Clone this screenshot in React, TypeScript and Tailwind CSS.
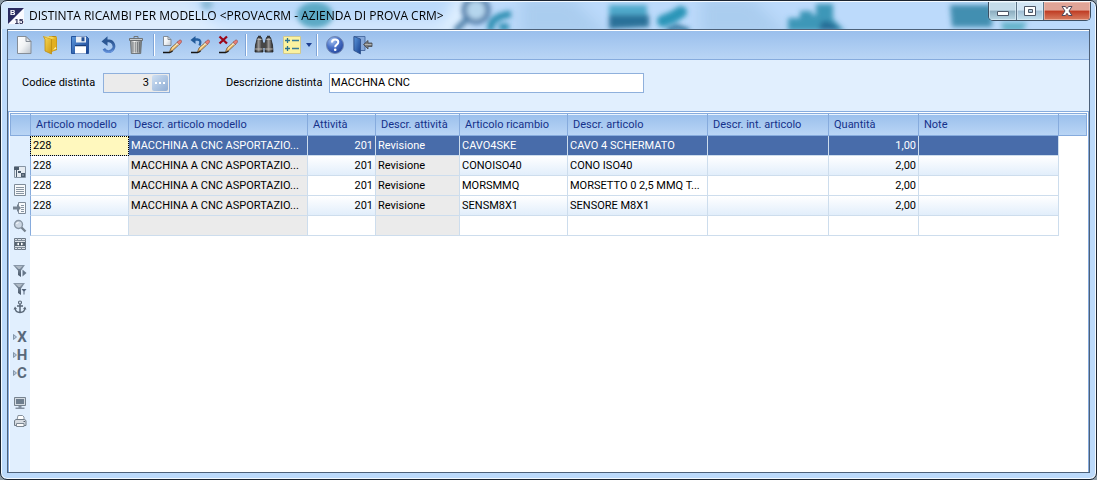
import React from "react";

type IconProps = { children: React.ReactNode; size?: number };

function Icon({ children, size = 20 }: IconProps) {
  return (
    <svg viewBox={`0 0 ${size} ${size}`} width={size} height={size} aria-hidden="true" className="block shrink-0">
      {children}
    </svg>
  );
}

function Gradients() {
  return (
    <svg width="0" height="0" className="absolute" aria-hidden="true">
      <defs>
        <linearGradient id="paper" x1="0" y1="0" x2="1" y2="1">
          <stop offset="0" stopColor="#ffffff" />
          <stop offset="0.5" stopColor="#f1f3f5" />
          <stop offset="1" stopColor="#bcc3cb" />
        </linearGradient>
        <linearGradient id="gold" x1="0" y1="0" x2="1" y2="1">
          <stop offset="0" stopColor="#f9dc5c" />
          <stop offset="1" stopColor="#cf9a10" />
        </linearGradient>
        <linearGradient id="blue" x1="0" y1="0" x2="1" y2="1">
          <stop offset="0" stopColor="#5b97dc" />
          <stop offset="1" stopColor="#163f8d" />
        </linearGradient>
        <linearGradient id="arrow" x1="0" y1="0" x2="0" y2="1">
          <stop offset="0" stopColor="#2b5590" />
          <stop offset="1" stopColor="#5382cc" />
        </linearGradient>
        <linearGradient id="metal" x1="0" y1="0" x2="1" y2="0">
          <stop offset="0" stopColor="#85898c" />
          <stop offset="0.35" stopColor="#f4f4f2" />
          <stop offset="1" stopColor="#6d7275" />
        </linearGradient>
        <linearGradient id="dark" x1="0" y1="0" x2="1" y2="0">
          <stop offset="0" stopColor="#222" />
          <stop offset="0.45" stopColor="#9a9896" />
          <stop offset="1" stopColor="#1d1d1f" />
        </linearGradient>
        <radialGradient id="globe" cx="0.35" cy="0.25" r="0.8">
          <stop offset="0" stopColor="#a7c5f2" />
          <stop offset="0.5" stopColor="#4a72c8" />
          <stop offset="1" stopColor="#24459c" />
        </radialGradient>
        <linearGradient id="slate" x1="0" y1="0" x2="0" y2="1">
          <stop offset="0" stopColor="#8b9aab" />
          <stop offset="1" stopColor="#465567" />
        </linearGradient>
      </defs>
    </svg>
  );
}

function Pencil() {
  return (
    <>
      <path d="M1 17.5h6.5l3-1.5" fill="none" stroke="#151515" strokeWidth="1.6" />
      <path d="M7.5 16.8 9 13l7-6.2 2 2-7 6.5z" fill="#efbf72" stroke="#6c4b24" strokeWidth="0.7" />
      <path d="m10 13.5 6.3-5.6" stroke="#fff0bd" strokeWidth="1" />
      <path d="m15 7.5 2.2-2.2q1-.8 2 .1t.1 2.1L17.200 9.500z" fill="#e77f78" stroke="#8e4343" strokeWidth="0.6" />
      <path d="m14.500 8 2.300 2.300" stroke="#d9e1ea" strokeWidth="1" />
    </>
  );
}

const icons = {
  newDoc: (
    <Icon>
      <path d="M3.500 1.500h8.500l5 5v12h-13.500z" fill="url(#paper)" stroke="#858d97" />
      <path d="M12 1.500v5h5z" fill="#dde1e6" stroke="#858d97" strokeLinejoin="round" />
    </Icon>
  ),
  open: (
    <Icon>
      <path d="M7 1h7l1 2v12l-6 2z" fill="#b88a16" />
      <path d="M9 3.500 14.500 1.500v13L9 17z" fill="#e2b023" />
      <path d="M1.500 1.500 9.500 4v15l-6.500-3V4.500z" fill="url(#gold)" stroke="#bd8e14" strokeWidth="0.8" />
      <path d="M1.500 1.500h8l4 1.500-4 1z" fill="#f6d75a" />
      <path d="m11 15 2.500-3 1 1.500z" fill="#fff4b5" />
    </Icon>
  ),
  save: (
    <Icon>
      <path d="M1.500 1.500h15l2 2v15h-17z" fill="url(#blue)" stroke="#24539c" />
      <path d="M6 1.500h10v6H6z" fill="#e8eef5" />
      <path d="M11.500 2.300h3v4h-3z" fill="#244f93" />
      <path d="M5 11h11v7.500H5z" fill="#fff" />
      <path d="M5 10h11v1.200H5z" fill="#173c79" />
    </Icon>
  ),
  undo: (
    <Icon>
      <path d="M8 5.800h3a5.400 5.400 0 1 1-5.200 8" fill="none" stroke="url(#arrow)" strokeWidth="2.800" />
      <path d="m3.500 6.500 6-5.200v9.700z" fill="#2c5894" />
      <path d="M5 15.300q5 4.200 10 .2" fill="none" stroke="#6d99df" strokeWidth="1" />
    </Icon>
  ),
  trash: (
    <Icon>
      <path d="M4.500 5.500h11l-.8 13h-9.400z" fill="url(#metal)" stroke="#696e71" strokeWidth="0.900" />
      <path d="M7 7v10.500M9.200 7v10.500M11.400 7v10.500M13.500 7v10.500" stroke="#6c7174" strokeWidth="0.900" />
      <path d="M3.500 3.500h13v2h-13z" fill="#c8cbcb" stroke="#65696c" strokeWidth="0.900" />
      <path d="M8 3.300V1.500h4v1.800" fill="none" stroke="#707476" />
    </Icon>
  ),
  editDoc: (
    <Icon>
      <path d="M1.500 1.500h4.500l3 3v6H1.500z" fill="url(#paper)" stroke="#79828c" strokeWidth="0.900" />
      <path d="M6 1.500v3h3" fill="none" stroke="#79828c" strokeWidth="0.900" />
      <Pencil />
    </Icon>
  ),
  editUndo: (
    <Icon>
      <path d="M4 4.500h3.500q4.500.5 2 6" fill="none" stroke="#2762a3" strokeWidth="2.300" />
      <path d="M.5 5 5.500 1v8z" fill="#235b99" />
      <Pencil />
    </Icon>
  ),
  editDelete: (
    <Icon>
      <path d="m1.500 1.500 7.500 7M9 1.500l-7.500 7" stroke="#9c0718" strokeWidth="2.300" />
      <Pencil />
    </Icon>
  ),
  find: (
    <Icon>
      <path d="M3.500 2.500h4l1 4 .5 10.500H1l.5-7z" fill="url(#dark)" stroke="#242424" strokeWidth="0.800" />
      <path d="M12.500 2.500h4l2 7.500.5 7H11l.5-10.500z" fill="url(#dark)" stroke="#242424" strokeWidth="0.800" />
      <path d="M8 7.500h4V13H8z" fill="#464646" />
      <path d="M1.200 14h7.500M11.200 14h7.500M3.500 4.500h4M12.500 4.500h4" stroke="#bcb7b0" strokeWidth="1" />
      <path d="M4 1.500h3M13 1.500h3" stroke="#353535" strokeWidth="1.500" />
    </Icon>
  ),
  options: (
    <Icon>
      <path d="M1.500 1.500h17v17h-17z" fill="#fbf2a0" stroke="#d0c990" />
      <path d="M3 5.500h5M5.500 3v5M3 13.500h5M5.500 11v5" stroke="#2c718f" strokeWidth="1.300" />
      <path d="M10 5.500h7M10 13.500h7" stroke="#397c99" strokeWidth="1.600" />
    </Icon>
  ),
  help: (
    <Icon>
      <circle cx="10" cy="10" r="8.500" fill="url(#globe)" stroke="#7086b2" />
      <path d="M7 7.500q0-3 3.100-3 3.200 0 3.200 2.600 0 1.500-1.800 2.700-1.300.8-1.300 2.400" fill="none" stroke="#fff" strokeWidth="2" />
      <circle cx="10.200" cy="14.800" r="1.300" fill="#fff" />
    </Icon>
  ),
  exit: (
    <Icon>
      <path d="M1 1.500h11v14H1z" fill="#87a9da" stroke="#46699f" strokeWidth="0.900" />
      <path d="M1 1.500 7.500 4v15L1 15.500z" fill="url(#blue)" stroke="#2d4f88" strokeWidth="0.800" />
      <path d="M10.500 9.500 15 5.500v2.500h4v3.500h-4V14z" fill="#777a7d" stroke="#45484c" strokeWidth="0.800" />
      <path d="M12 9.500h6.500" stroke="#b5b5b1" />
    </Icon>
  ),
};

const railGroups = [
  [
    {
      label: "Struttura",
      icon: (
        <Icon size={14}>
          <path d="M1.500 1.500h11v11h-11z" fill="#e5ebf1" stroke="#8795a4" />
          <path d="M1 2h5v3H1zM3 5h1v7H3zM5 6h3v2H5zM8 8h4v4H8z" fill="#4b5b6c" />
          <path d="M9.500 9.500h1v1h-1z" fill="#fff" />
        </Icon>
      ),
    },
    {
      label: "Elenco",
      icon: (
        <Icon size={14}>
          <path d="M1.500 1.500h11v11h-11z" fill="#f7f9fb" stroke="#7e8b99" />
          <path d="M3 4.500h8M3 6.500h8M3 8.500h8M3 10.500h8" stroke="#8794a2" />
        </Icon>
      ),
    },
    {
      label: "Inserisci",
      icon: (
        <Icon size={14}>
          <path d="M5.500 1.500h7v11h-7z" fill="#f7f9fb" stroke="#7e8b99" />
          <path d="M8 4.500h3M8 6.500h3M8 8.500h3M8 10.500h3" stroke="#8794a2" />
          <path d="M0 5.500h4V3l4 4-4 4V8.500H0z" fill="#768392" />
        </Icon>
      ),
    },
    {
      label: "Zoom",
      icon: (
        <Icon size={14}>
          <circle cx="5.500" cy="5.500" r="4" fill="#ccd7e3" stroke="#8a97a5" strokeWidth="1.400" />
          <path d="m8.500 8.500 4 4" stroke="#76818d" strokeWidth="2.300" />
          <path d="M3.500 5q.5-1.500 2-1.500" fill="none" stroke="#fff" />
        </Icon>
      ),
    },
    {
      label: "Adatta colonne",
      icon: (
        <Icon size={14}>
          <path d="M1.500 1.500h11v11h-11z" fill="#dce2e8" stroke="#6a7785" />
          <path d="M1 3.500h12M1 10.500h12M4.500 1v3M8.500 1v3M4.500 10v3M8.500 10v3" stroke="#7d8996" />
          <path d="M2 5h10v4H2z" fill="#56636f" />
          <path d="M6 5.500v3L3.500 7zM8 5.500v3L10.500 7z" fill="#fff" />
        </Icon>
      ),
    },
  ],
  [
    {
      label: "Applica filtro",
      icon: (
        <Icon size={14}>
          <path d="M0 1h12L8 6.500V13l-3-2V6.500z" fill="url(#slate)" />
          <path d="M2.500 2h7L7 5h-1.500z" fill="#aeb9c5" />
          <path d="M9.500 5.500v7l4-3.500z" fill="#66778a" />
        </Icon>
      ),
    },
    {
      label: "Filtro",
      icon: (
        <Icon size={14}>
          <path d="M0 1h12L8 6.500V13l-3-2V6.500z" fill="url(#slate)" />
          <path d="M2.500 2h7L7 5h-1.500z" fill="#aeb9c5" />
          <path d="M8.500 7h5l-2 2.500v3h-1v-3z" fill="#52637a" />
        </Icon>
      ),
    },
    {
      label: "Ancora",
      icon: (
        <Icon size={14}>
          <circle cx="7" cy="2.500" r="1.500" fill="none" stroke="#5a6878" strokeWidth="1.200" />
          <path d="M7 4v8.500M4 6h6M2 8q.5 4.500 5 4.500T12 8" fill="none" stroke="#5a6878" strokeWidth="1.500" />
          <path d="m.5 9.500 1.500-3 2 2.500zM13.500 9.500 12 6.500 10 9z" fill="#5a6878" />
        </Icon>
      ),
    },
  ],
];

const letterTools = ["X", "H", "C"];

const outputTools = [
  {
    label: "Anteprima a video",
    icon: (
      <Icon size={14}>
        <path d="M1.500 1.500h11v8h-11z" fill="#d4dbe2" stroke="#76838f" />
        <path d="M3 3h8v5H3z" fill="#6e7e8e" />
        <path d="M5.500 10h3v1.500h3V13h-9v-1.500h3z" fill="#8390a0" />
      </Icon>
    ),
  },
  {
    label: "Stampa",
    icon: (
      <Icon size={14}>
        <path d="M4 6 5 1.500h4.500L11 3v3" fill="#fff" stroke="#87929e" />
        <path d="M1.500 6.500 3 5.500h8.500l1.500 1v5H1.500z" fill="#d6dbe1" stroke="#707c88" />
        <path d="M3.500 9.500h7.500v3h-7.500z" fill="#fafafa" stroke="#7c8792" />
        <path d="M10.500 7.500h1.500" stroke="#59636e" />
      </Icon>
    ),
  },
];

const columns = [
  { title: "Articolo modello", width: "w-[99px]", key: "model" },
  { title: "Descr. articolo modello", width: "w-[179px]", key: "modelDesc" },
  { title: "Attività", width: "w-[68px]", key: "activity" },
  { title: "Descr. attività", width: "w-[84px]", key: "activityDesc" },
  { title: "Articolo ricambio", width: "w-[108px]", key: "part" },
  { title: "Descr. articolo", width: "w-[140px]", key: "partDesc" },
  { title: "Descr. int. articolo", width: "w-[121px]", key: "intDesc" },
  { title: "Quantità", width: "w-[90px]", key: "qty" },
  { title: "Note", width: "w-[140px]", key: "note" },
];

const rows: Record<string, string>[] = [
  { part: "CAVO4SKE", partDesc: "CAVO 4 SCHERMATO", qty: "1,00" },
  { part: "CONOISO40", partDesc: "CONO ISO40", qty: "2,00" },
  { part: "MORSMMQ", partDesc: "MORSETTO 0 2,5 MMQ T...", qty: "2,00" },
  { part: "SENSM8X1", partDesc: "SENSORE M8X1", qty: "2,00" },
].map((r) => ({
  model: "228",
  modelDesc: "MACCHINA A CNC ASPORTAZIO...",
  activity: "201",
  activityDesc: "Revisione",
  ...r,
}));
rows.push({});

function ToolButton({ label, children }: { label: string; children: React.ReactNode }) {
  return (
    <button type="button" aria-label={label} className="flex h-7 w-7 items-center justify-center">
      {children}
    </button>
  );
}

function Separator() {
  return (
    <div className="flex w-2 justify-center">
      <div className="h-[22px] w-[2px] border-l border-[#7fa5d8] bg-white" />
    </div>
  );
}

function TitleBackdrop() {
  return (
    <svg className="absolute inset-0 h-full w-full" aria-hidden="true">
      <defs>
        <filter id="soft" x="-20%" y="-20%" width="140%" height="140%">
          <feGaussianBlur stdDeviation="2.500" />
        </filter>
        <filter id="softer" x="-20%" y="-50%" width="140%" height="200%">
          <feGaussianBlur stdDeviation="7" />
        </filter>
      </defs>
      <g filter="url(#softer)">
        <path d="M-10-5h200l35 40H-10z" fill="#d5e8fc" />
        <path d="M520-5h50l40 40h-90zM700-5h50l40 40h-90z" fill="#9fc4e7" opacity="0.600" />
        <path d="M20 20h420v12H20z" fill="#e9f4ff" opacity="0.700" />
        <path d="M455-5h30l-30 40h-20z" fill="#e0f0ff" />
      </g>
      <g filter="url(#soft)">
        <ellipse cx="314" cy="13" rx="18" ry="13" fill="#5ba9c5" />
        <circle cx="206" cy="2" r="6" fill="#8dbbd8" />
        <circle cx="475" cy="8" r="12" fill="#b5d5ed" stroke="#4f7ca8" strokeWidth="5" />
        <path d="m466 17-12 12" stroke="#5182aa" strokeWidth="6" />
        <path d="M490 29q-3-14 20-17M498 25h10" fill="none" stroke="#2f8fb2" strokeWidth="7" />
        <path d="M608 3h38v11h-38z" fill="#4fa9cb" />
        <path d="M608 13h40v12l-40 2z" fill="#2b7199" />
        <path d="m662 19 10-4 8-5" fill="none" stroke="#2995b8" strokeWidth="12" strokeLinecap="round" />
        <path d="m666 29 10-4 12 4" fill="none" stroke="#286e97" strokeWidth="5" />
        <path d="M787 16h12V9h12v4h4V2h17v15l12 12h-57z" fill="#3c97b8" />
        <path d="M820 20q10-4 20 9h-22z" fill="#286e97" />
        <path d="M949 3h42v22h-40z" fill="#438fb1" />
        <path d="M1000 20h26l-4 9h-20z" fill="#65b2ca" />
      </g>
    </svg>
  );
}

function TitleBar() {
  return (
    <header className="relative flex h-[27px] items-center overflow-hidden">
      <TitleBackdrop />
      <svg viewBox="0 0 16 16" width="16" height="16" role="img" aria-label="Business 15" className="relative ml-[7px] shrink-0">
        <path d="M0 0h16v16H0z" fill="#fafaff" />
        <path d="M0 0h16L0 16z" fill="#292a60" />
        <text x="2" y="7" fontSize="7.500" fontWeight="700" fill="#fff" fontFamily="Liberation Sans, sans-serif">B</text>
        <text x="6.500" y="15.500" fontSize="8" fontWeight="700" fill="#24244c" fontFamily="Liberation Sans, sans-serif">15</text>
      </svg>
      <h1 className="relative ml-[5px] grow truncate font-['Open_Sans','Noto_Sans',sans-serif] text-[12px] leading-4 text-black">
        DISTINTA RICAMBI PER MODELLO &lt;PROVACRM - AZIENDA DI PROVA CRM&gt;
      </h1>
      <div className="relative mr-[5px] flex h-[19px] shrink-0 self-start overflow-hidden rounded-b-[5px] border border-t-0 border-[#3c4f63]">
        <button type="button" aria-label="Riduci a icona" className="flex w-7 items-center justify-center border-r border-[#5e7488] bg-linear-to-b from-[#c4dbe9] from-45% via-[#8cadbf] via-50% to-[#b9d8e5] shadow-[inset_0_0_0_1px_#e3f2fa99]">
          <Icon size={14}><path d="M1.500 7.500h11v4h-11z" fill="#fff" stroke="#4c5666" /></Icon>
        </button>
        <button type="button" aria-label="Ingrandisci" className="flex w-[27px] items-center justify-center border-r border-[#5e7488] bg-linear-to-b from-[#d2e5f4] from-45% via-[#9fbdd4] via-50% to-[#c4e2ef] shadow-[inset_0_0_0_1px_#e3f2fa99]">
          <Icon size={14}><path d="M1.500 2.500h11v9h-11zM5.500 5.500v3h4v-3z" fill="#fff" fillRule="evenodd" stroke="#4c5666" /></Icon>
        </button>
        <button type="button" aria-label="Chiudi" className="flex w-[46px] items-center justify-center bg-linear-to-b from-[#e0a497] from-45% via-[#bf3a22] via-50% to-[#d77c60] shadow-[inset_0_0_0_1px_#f5c9bd99]">
          <Icon size={14}><path d="M2 2.500h3.500L7 4.700l1.500-2.200H12L9 7l3 4.500H8.500L7 9.300l-1.500 2.200H2L5 7z" fill="#fff" stroke="#51485a" /></Icon>
        </button>
      </div>
    </header>
  );
}

function Toolbar() {
  return (
    <div role="toolbar" aria-label="Comandi" className="flex h-[30px] items-center border-t border-b border-t-white border-b-[#86abdd] bg-linear-to-b from-[#9abfec] to-[#b9d5f5] pl-[2px]">
      <ToolButton label="Nuovo">{icons.newDoc}</ToolButton>
      <ToolButton label="Apri">{icons.open}</ToolButton>
      <ToolButton label="Salva">{icons.save}</ToolButton>
      <ToolButton label="Ripristina">{icons.undo}</ToolButton>
      <ToolButton label="Cancella">{icons.trash}</ToolButton>
      <Separator />
      <ToolButton label="Nuova riga">{icons.editDoc}</ToolButton>
      <ToolButton label="Ripristina riga">{icons.editUndo}</ToolButton>
      <ToolButton label="Cancella riga">{icons.editDelete}</ToolButton>
      <Separator />
      <ToolButton label="Cerca">{icons.find}</ToolButton>
      <ToolButton label="Opzioni">{icons.options}</ToolButton>
      <button type="button" aria-label="Altre opzioni" className="flex h-7 w-[7px] items-center">
        <svg viewBox="0 0 6 4" width="6" height="4" aria-hidden="true"><path d="M0 0h6L3 4z" fill="#1d3f91" /></svg>
      </button>
      <Separator />
      <ToolButton label="Guida">{icons.help}</ToolButton>
      <ToolButton label="Esci">{icons.exit}</ToolButton>
    </div>
  );
}

function FormBar() {
  return (
    <form className="flex h-[51px] items-center bg-[#e1effe] pb-[6px] pl-[14px]">
      <label htmlFor="code" className="w-[81px] shrink-0">Codice distinta</label>
      <div className="flex h-5 w-[67px] shrink-0 items-center border border-[#8fb0dc] bg-[#ebebeb] pr-px">
        <input id="code" defaultValue="3" readOnly className="w-0 grow bg-transparent pr-[3px] text-right outline-none" />
        <button type="button" aria-label="Sfoglia" className="flex h-4 w-4 items-center justify-center gap-[2px] rounded-[2px] bg-linear-to-br from-[#cfe0f3] to-[#8fadd4]">
          <span className="h-[2px] w-[2px] bg-white" />
          <span className="h-[2px] w-[2px] bg-white" />
          <span className="h-[2px] w-[2px] bg-white" />
        </button>
      </div>
      <label htmlFor="description" className="ml-14 w-[103px] shrink-0">Descrizione distinta</label>
      <input id="description" defaultValue="MACCHNA CNC" className="h-5 w-[315px] border border-[#8fb0dc] bg-white px-px outline-none" />
    </form>
  );
}

function Rail() {
  return (
    <div className="flex w-5 shrink-0 flex-col">
      <div className="h-[23px] border border-r-0 border-[#86abdd] bg-linear-to-b from-[#9abfec] to-[#b9d5f5] shadow-[inset_0_1px_0_#e8f3ff]" />
      <div className="flex grow flex-col bg-[#e1effe] pt-[27px]">
        {railGroups.map((group, i) => (
          <div key={i} className={i === 0 ? "mb-[9px]" : "mb-3"}>
            {group.map((tool) => (
              <button key={tool.label} type="button" aria-label={tool.label} className="flex h-[18px] w-5 items-center justify-center">
                {tool.icon}
              </button>
            ))}
          </div>
        ))}
        <div className="mb-3">
          {letterTools.map((letter) => (
            <button key={letter} type="button" className="flex h-[18px] w-5 items-center justify-center font-['Roboto',sans-serif] text-[15px] leading-none font-bold text-[#59697b]">
              <svg viewBox="0 0 4 6" width="4" height="6" aria-hidden="true"><path d="M.5.500 3.500 3 .5 5.500z" fill="#b5c6da" stroke="#71859b" strokeWidth="0.800" /></svg>
              {letter}
            </button>
          ))}
        </div>
        {outputTools.map((tool) => (
          <button key={tool.label} type="button" aria-label={tool.label} className="flex h-[18px] w-5 items-center justify-center">
            {tool.icon}
          </button>
        ))}
      </div>
    </div>
  );
}

function cellStyle(key: string, row: number) {
  if (row === 0) {
    return key === "model"
      ? "bg-[#fff8be] text-black outline-1 -outline-offset-1 outline-dotted outline-black"
      : "bg-[#486caa] text-white";
  }
  if (key === "modelDesc" || key === "activityDesc") return "bg-[#ebebeb] text-black";
  return row % 2 === 1 ? "bg-linear-to-b from-white to-[#e2eefb] text-black" : "bg-white text-black";
}

function Grid() {
  return (
    <table className="w-full table-fixed border-separate border-spacing-0">
      <thead>
        <tr className="h-[23px]">
          {columns.map((c) => (
            <th
              key={c.key}
              scope="col"
              className={`${c.width} truncate border-y border-r border-[#86abdd] bg-linear-to-b from-[#9abfec] to-[#b9d5f5] p-0 pl-[5px] text-left font-normal text-[#15318a] shadow-[inset_0_1px_0_#e8f3ff] first:border-l`}
            >
              {c.title}
            </th>
          ))}
          <td className="border-y border-r border-[#86abdd] bg-linear-to-b from-[#9abfec] to-[#b9d5f5] p-0 shadow-[inset_0_1px_0_#e8f3ff]" />
        </tr>
      </thead>
      <tbody>
        {rows.map((row, i) => (
          <tr key={i} className="h-5">
            {columns.map((c) => (
              <td
                key={c.key}
                className={`overflow-hidden border-r border-b border-[#cddded] p-0 px-[2px] leading-[19px] whitespace-nowrap first:border-l first:border-l-[#86abdd] ${
                  c.key === "activity" || c.key === "qty" ? "text-right" : "text-left"
                } ${cellStyle(c.key, i)}`}
              >
                {row[c.key]}
              </td>
            ))}
            <td />
          </tr>
        ))}
      </tbody>
    </table>
  );
}

export default function App() {
  return (
    <div className="min-h-screen bg-[#8c9aa5]">
      <Gradients />
      <div className="flex min-h-screen flex-col overflow-hidden rounded-[7px] border border-[#1b2430] bg-[#bcdafb] font-['Roboto','DejaVu_Sans',sans-serif] text-[11px] leading-4 text-black shadow-[inset_0_0_0_1px_#f4faff]">
        <div className="flex grow flex-col pt-px pb-[6px]">
          <TitleBar />
          <div className="flex grow px-[6px]">
            <main className="flex min-w-0 grow flex-col border border-[#4d6179] bg-white">
              <Toolbar />
              <FormBar />
              <section aria-label="Ricambi" className="flex grow border border-b-0 border-[#86abdd] p-px pb-0">
                <Rail />
                <div className="min-w-0 grow">
                  <Grid />
                </div>
              </section>
            </main>
          </div>
        </div>
      </div>
    </div>
  );
}
